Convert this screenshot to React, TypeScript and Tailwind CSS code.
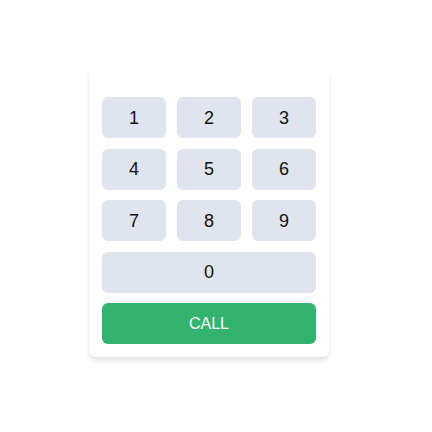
const keys = ['1', '2', '3', '4', '5', '6', '7', '8', '9'];

export default function App() {
  return (
    <div className="min-h-[432px] bg-white pl-[89px] pt-[68px] font-['Liberation_Sans',Arial,sans-serif]">
      <div className="w-[240px] rounded-md bg-white px-[13px] pt-[29px] pb-[13px] shadow-md">
        <div className="grid grid-cols-3 gap-x-[11px] gap-y-[10.5px]">
          {keys.map((k) => (
            <button
              key={k}
              className="flex h-[41px] items-center justify-center rounded-md bg-[#dfe4ee] text-lg text-[#111]"
            >
              {k}
            </button>
          ))}
          <button className="col-span-3 flex h-[41px] items-center justify-center rounded-md bg-[#dfe4ee] text-lg text-[#111]">
            0
          </button>
        </div>
        <button className="mt-[10.5px] flex h-[41px] w-full items-center justify-center rounded-md bg-[#33b46e] text-base text-white">
          CALL
        </button>
      </div>
    </div>
  );
}
